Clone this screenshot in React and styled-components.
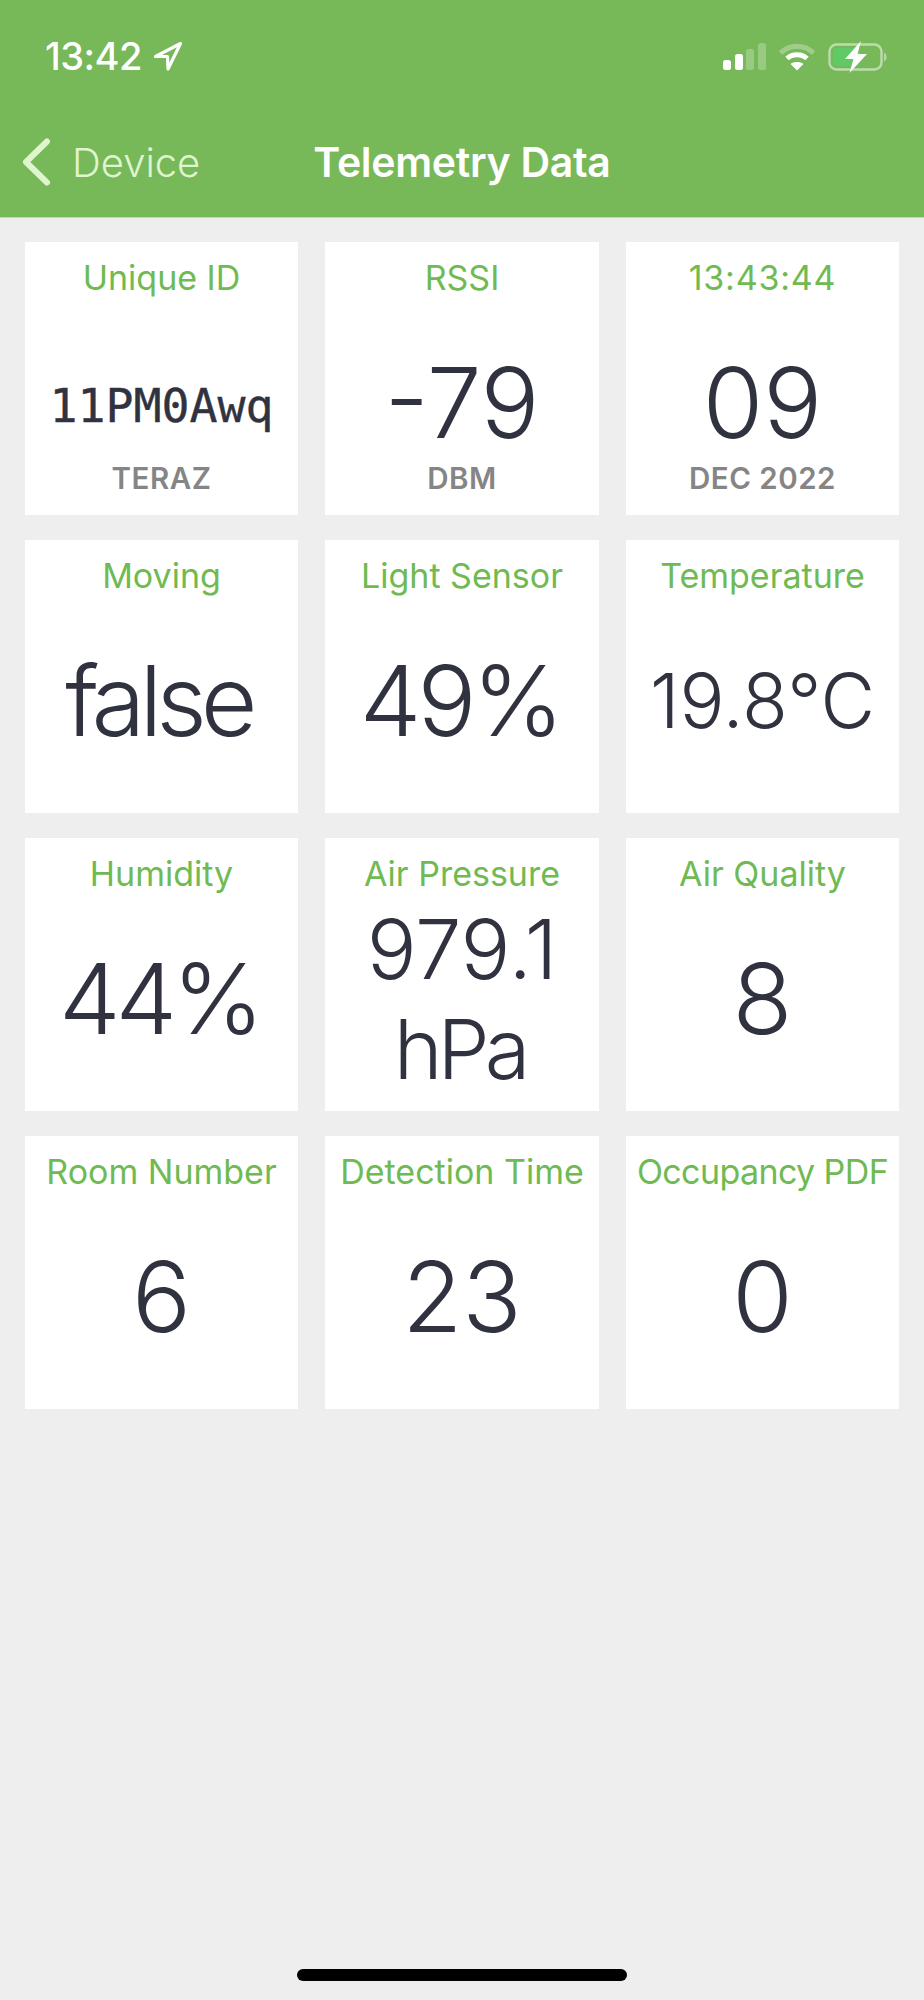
import React from "react";
import styled, { createGlobalStyle } from "styled-components";

const GlobalStyle = createGlobalStyle`
  html, body {
    margin: 0;
    padding: 0;
    background: #eeeeee;
  }
  body {
    font-family: Inter, "Noto Sans", "Liberation Sans", sans-serif;
  }
`;

const Page = styled.div`
  width: 924px;
  height: 2000px;
  background: #eeeeee;
  display: flex;
  flex-direction: column;
  overflow: hidden;
`;

const Header = styled.header`
  height: 217px;
  background: #77b859;
  border-bottom: 1px solid #c5d3bd;
  flex-shrink: 0;
  display: flex;
  flex-direction: column;
`;

const StatusBar = styled.div`
  height: 56px;
  margin-top: 28px;
  padding: 0 36px 0 45px;
  display: flex;
  align-items: center;
  justify-content: space-between;
  color: #fff;
`;

const Clock = styled.div`
  display: flex;
  align-items: center;
  gap: 11px;
  font-size: 38px;
  font-weight: 500;
  letter-spacing: -0.5px;
`;

const StatusIcons = styled.div`
  display: flex;
  align-items: center;
  gap: 12px;
  padding-top: 2px;
`;

const NavBar = styled.div`
  height: 68px;
  margin-top: 44px;
  padding: 0 22px;
  display: grid;
  grid-template-columns: 1fr auto 1fr;
  align-items: center;
`;

const BackLink = styled.div`
  display: flex;
  align-items: center;
  gap: 20px;
  color: #dff5cf;
  font-size: 40px;
  font-weight: 300;
`;

const NavTitle = styled.div`
  color: #fff;
  font-size: 41px;
  font-weight: 600;
  letter-spacing: -0.3px;
`;

const Grid = styled.main`
  padding: 24px 25px 0;
  display: grid;
  grid-template-columns: 273px 274px 273px;
  grid-auto-rows: 273px;
  justify-content: space-between;
  row-gap: 25px;
`;

const Card = styled.section`
  background: #fff;
  display: flex;
  flex-direction: column;
  align-items: center;
  padding: 15px 0 9px;
  box-sizing: border-box;
  text-align: center;
`;

const CardTitle = styled.div`
  height: 40px;
  line-height: 42px;
  font-size: 34px;
  letter-spacing: ${(p) => p.$spacing || 0}px;
  color: #6fba52;
  white-space: nowrap;
`;

const Value = styled.div`
  flex: 1;
  display: flex;
  align-items: center;
  justify-content: center;
  padding-top: 3px;
  padding-right: ${(p) => Math.abs(p.$spacing || 0)}px;
  color: #30333f;
  font-size: ${(p) => p.$size || 98}px;
  line-height: 100px;
  font-weight: 300;
  letter-spacing: ${(p) => p.$spacing || 0}px;
`;

const MonoValue = styled(Value)`
  font-family: "DejaVu Sans Mono", "Liberation Mono", monospace;
  font-size: 46.5px;
  font-weight: 400;
  padding-top: 8px;
  -webkit-text-stroke: 0.4px #30333f;
`;

const Unit = styled.span`
  letter-spacing: -5px;
  padding-right: 5px;
`;

const SubLabel = styled.div`
  height: 28px;
  line-height: 28px;
  margin: -42px 0 14px;
  font-size: 29.5px;
  font-weight: 600;
  color: #858585;
  letter-spacing: 0.5px;
`;

const HomeBar = styled.div`
  width: 330px;
  height: 12px;
  border-radius: 6px;
  background: #000;
  margin: auto auto 19px;
`;

const ArrowIcon = () => (
  <svg width="30" height="30" viewBox="0 0 30 30" fill="none">
    <path
      d="M27.5 2.5 L2.5 15.5 L14.5 15.5 L15 28 Z"
      stroke="#fff"
      strokeWidth="3.2"
      strokeLinejoin="round"
    />
  </svg>
);

const SignalIcon = () => (
  <svg width="43" height="28" viewBox="0 0 43 28" fill="#fff">
    <rect x="0" y="17" width="8" height="10" rx="2.5" />
    <rect x="12" y="11" width="8" height="16" rx="2.5" />
    <rect x="23" y="6" width="8" height="21" rx="2.5" opacity="0.25" />
    <rect x="35" y="0" width="8" height="27" rx="2.5" opacity="0.25" />
  </svg>
);

const WifiIcon = () => (
  <svg width="38" height="28" viewBox="0 0 38 28" fill="none" stroke="#fff" strokeWidth="5">
    <path d="M2.5 10 C12 1 26 1 35.5 10" opacity="0.3" />
    <path d="M9 15.5 C14.5 10.5 23.5 10.5 29 15.5" />
    <path d="M19 27.5 L12.5 21 C16 18.4 22 18.4 25.5 21 Z" fill="#fff" stroke="none" />
  </svg>
);

const BatteryIcon = () => (
  <svg width="60" height="32" viewBox="0 0 60 32" fill="none">
    <rect x="1.5" y="3.5" width="52" height="25" rx="7" stroke="#fff" strokeOpacity="0.5" strokeWidth="2.4" />
    <rect x="5" y="7" width="27" height="18" rx="3.5" fill="#5fca66" />
    <path d="M56 11.5 C59.5 13 59.5 19 56 20.5 Z" fill="#fff" fillOpacity="0.45" />
    <path d="M33 0 L17 18 H25.5 L21.5 32 L39 13 H29.5 Z" fill="#fff" />
  </svg>
);

const ChevronIcon = () => (
  <svg width="30" height="48" viewBox="0 0 30 48" fill="none">
    <path
      d="M25 3.5 L4 24 L25 44.5"
      stroke="#dff5cf"
      strokeWidth="6"
      strokeLinecap="round"
      strokeLinejoin="round"
    />
  </svg>
);

const cards = [
  { title: "Unique ID", mono: true, value: "11PM0Awq", sub: "TERAZ" },
  { title: "RSSI", value: "-79", sub: "DBM" },
  { title: "13:43:44", titleSpacing: 0.8, value: "09", sub: "DEC 2022" },
  { title: "Moving", value: "false", spacing: -6 },
  { title: "Light Sensor", value: "49%", spacing: -4 },
  { title: "Temperature", value: "19.8°C", size: 75 },
  { title: "Humidity", value: "44%", spacing: -5 },
  { title: "Air Pressure", value: <span>979.1<br /><Unit>hPa</Unit></span>, size: 83 },
  { title: "Air Quality", value: "8" },
  { title: "Room Number", value: "6" },
  { title: "Detection Time", value: "23" },
  { title: "Occupancy PDF", value: "0", titleSpacing: -0.6 },
];

export default function App() {
  return (
    <Page>
      <GlobalStyle />
      <Header>
        <StatusBar>
          <Clock>
            13:42
            <ArrowIcon />
          </Clock>
          <StatusIcons>
            <SignalIcon />
            <WifiIcon />
            <BatteryIcon />
          </StatusIcons>
        </StatusBar>
        <NavBar>
          <BackLink>
            <ChevronIcon />
            Device
          </BackLink>
          <NavTitle>Telemetry Data</NavTitle>
          <div />
        </NavBar>
      </Header>
      <Grid>
        {cards.map((c) => {
          const V = c.mono ? MonoValue : Value;
          return (
            <Card key={c.title}>
              <CardTitle $spacing={c.titleSpacing}>{c.title}</CardTitle>
              <V $size={c.size} $spacing={c.spacing}>
                {c.value}
              </V>
              {c.sub && <SubLabel>{c.sub}</SubLabel>}
            </Card>
          );
        })}
      </Grid>
      <HomeBar />
    </Page>
  );
}
